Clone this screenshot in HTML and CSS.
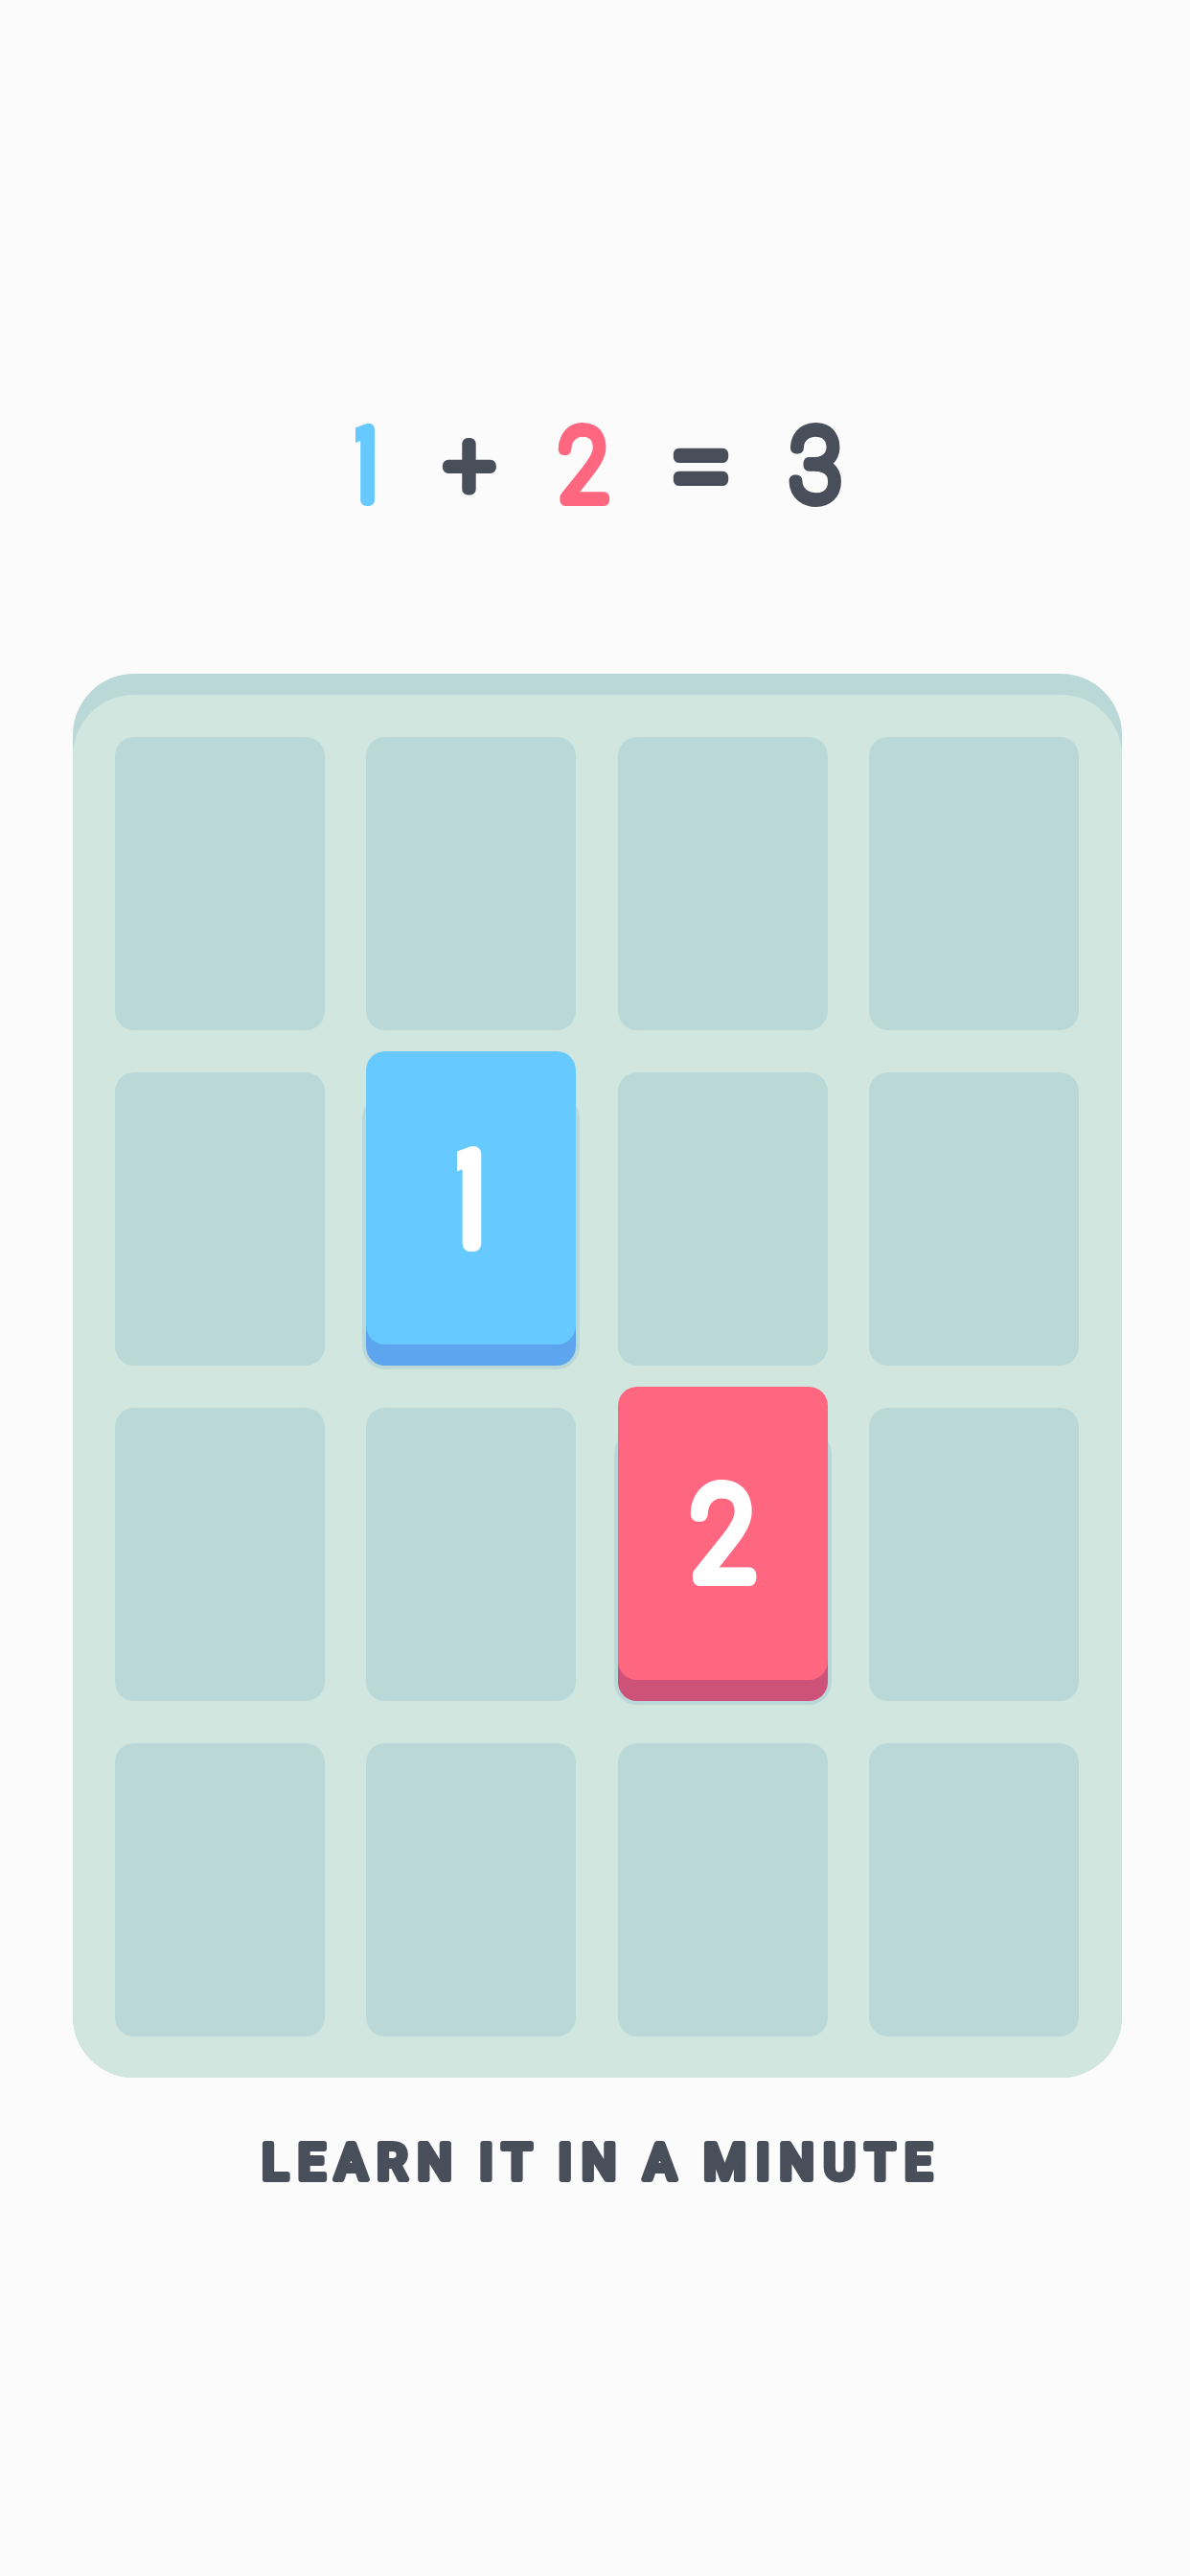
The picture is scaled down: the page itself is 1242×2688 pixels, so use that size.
FILE: index.html
```html
<!DOCTYPE html>
<html lang="en">
<head>
    <meta charset="UTF-8">
    <meta name="viewport" content="width=device-width, initial-scale=1.0">
    <title>Learn it in a minute</title>
    <link rel="stylesheet" href="styles.css">
</head>
<body>

<svg class="equation" viewBox="0 0 1242 150">
    <clipPath id="eq-one-clip"><rect x="371" y="20" width="30" height="110" rx="7"></rect></clipPath>
    <text class="eq-num eq-blue" x="380" y="112" clip-path="url(#eq-one-clip)">1</text>
    <text class="eq-plus eq-dark" x="490" y="107">+</text>
    <text class="eq-num eq-red" transform="translate(609 112) scale(0.92 1)">2</text>
    <text class="eq-equals eq-dark" transform="translate(732 116.5) scale(0.93 1)">=</text>
    <text class="eq-num eq-dark" transform="translate(851 112) scale(0.94 1)">3</text>
</svg>

<div class="board">
    <div class="board-face">
        <div class="cell"></div>
        <div class="cell"></div>
        <div class="cell"></div>
        <div class="cell"></div>

        <div class="cell"></div>
        <div class="cell">
            <div class="tile tile-blue">
                <svg class="tile-face" viewBox="0 0 219 306">
                    <clipPath id="tile-one-clip"><rect x="95" y="80" width="40" height="140" rx="9"></rect></clipPath>
                    <text class="tile-num" x="106" y="201" clip-path="url(#tile-one-clip)">1</text>
                </svg>
            </div>
        </div>
        <div class="cell"></div>
        <div class="cell"></div>

        <div class="cell"></div>
        <div class="cell"></div>
        <div class="cell">
            <div class="tile tile-red">
                <svg class="tile-face" viewBox="0 0 219 306">
                    <text class="tile-num" transform="translate(109.5 200) scale(0.92 1)">2</text>
                </svg>
            </div>
        </div>
        <div class="cell"></div>

        <div class="cell"></div>
        <div class="cell"></div>
        <div class="cell"></div>
        <div class="cell"></div>
    </div>
</div>

<svg class="caption" viewBox="0 0 1242 90">
    <text class="caption-text" x="628" y="65">LEARN IT IN A MINUTE</text>
</svg>

</body>
</html>
```

FILE: styles.css
```css
body {
    margin: 0;
    background-color: #fbfbfb;
    font-family: Roboto, "Liberation Sans", sans-serif;
}

/* SVG text so the thin letters can be thickened with a round stroke */
.equation {
    display: block;
    width: 1242px;
    height: 150px;
    margin-top: 410px;
}
.eq-num,
.eq-plus,
.eq-equals {
    font-weight: 100;
    text-anchor: middle;
    stroke-width: 12px;
    stroke-linecap: round;
    stroke-linejoin: round;
}
.eq-num {
    font-size: 104px;
}
.eq-plus {
    font-size: 90px;
}
.eq-equals {
    font-size: 122px;
}
.eq-blue {
    fill: #66c9ff;
    stroke: #66c9ff;
}
.eq-red {
    fill: #ff6680;
    stroke: #ff6680;
}
.eq-dark {
    fill: #484e5a;
    stroke: #484e5a;
}

.board {
    width: 1095px;
    margin: 143px 0 0 76px;
    padding-top: 22px;
    background-color: #bbd8d8;
    border-radius: 64px;
}
.board-face {
    display: grid;
    grid-template-columns: repeat(4, 219px);
    grid-auto-rows: 306px;
    column-gap: 43.5px;
    row-gap: 44px;
    padding: 44px 43.5px 43px;
    background-color: #d0e6de;
    border-radius: 64px;
}
.cell {
    position: relative;
    background-color: #bbd8d8;
    border-radius: 20px;
}

/* Tile sits 22px above its cell, the dark edge lines up with the cell bottom */
.tile {
    position: absolute;
    left: 0;
    right: 0;
    top: -22px;
    bottom: 0;
    border-radius: 20px;
}
.tile::before {
    content: "";
    position: absolute;
    left: -4px;
    right: -4px;
    top: 46px;
    bottom: -4px;
    background-color: #bbd8d8;
    border-radius: 24px;
}
.tile::after {
    content: "";
    position: absolute;
    left: 0;
    right: 0;
    bottom: 0;
    height: 60px;
    border-radius: 0 0 20px 20px;
}
.tile-blue::after {
    background-color: #5da5ee;
}
.tile-red::after {
    background-color: #cc5279;
}
.tile-face {
    position: absolute;
    left: 0;
    top: 0;
    z-index: 1;
    width: 219px;
    height: 306px;
    border-radius: 20px;
}
.tile-blue .tile-face {
    background-color: #66c9ff;
}
.tile-red .tile-face {
    background-color: #ff6680;
}
.tile-num {
    font-size: 132px;
    font-weight: 100;
    text-anchor: middle;
    fill: #fff;
    stroke: #fff;
    stroke-width: 16px;
    stroke-linecap: round;
    stroke-linejoin: round;
}

.caption {
    display: block;
    width: 1242px;
    height: 90px;
    margin-top: 41px;
}
.caption-text {
    font-size: 51px;
    font-weight: 500;
    letter-spacing: 10px;
    word-spacing: -4px;
    text-anchor: middle;
    fill: #484e5a;
    stroke: #484e5a;
    stroke-width: 6px;
    stroke-linecap: round;
    stroke-linejoin: round;
}
```
